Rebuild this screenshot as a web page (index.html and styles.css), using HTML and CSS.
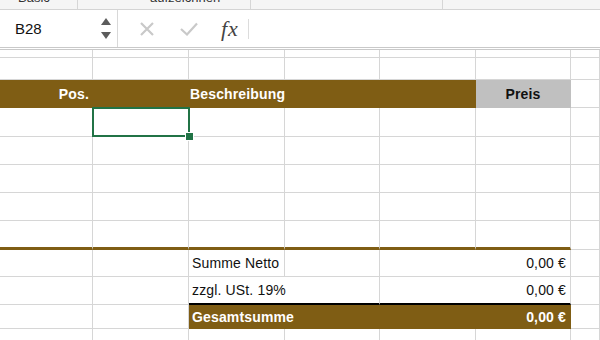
FILE: index.html
```html
<!DOCTYPE html>
<html lang="de">
<head>
    <meta charset="UTF-8">
    <title>Rechnung – Tabelle</title>
    <link rel="stylesheet" href="styles.css">
</head>
<body>
    <div class="ribbon">
        <span class="ribbon-item item-basic">Basic</span>
        <span class="ribbon-sep"></span>
        <span class="ribbon-item item-record">aufzeichnen</span>
        <span class="ribbon-sep sep-2"></span>
        <span class="ribbon-sep sep-3"></span>
    </div>

    <div class="formula-bar">
        <div class="name-box">
            <span class="cell-ref">B28</span>
            <span class="stepper">
                <span class="arrow-up"></span>
                <span class="arrow-down"></span>
            </span>
        </div>
        <div class="formula-tools">
            <svg class="tool tool-cancel" width="18" height="14" viewBox="0 0 18 14">
                <path d="M3 1 L15 13 M15 1 L3 13" stroke="#c9c9c9" stroke-width="2.2" fill="none"/>
            </svg>
            <svg class="tool tool-ok" width="20" height="14" viewBox="0 0 20 14">
                <path d="M2 7 L8 12.5 L18 1.5" stroke="#c9c9c9" stroke-width="2.2" fill="none"/>
            </svg>
            <span class="fx">fx</span>
            <span class="tool-sep"></span>
        </div>
        <div class="formula-input"></div>
    </div>

    <div class="sheet">
        <div class="row row-cut">
            <div></div><div></div><div></div><div></div><div></div><div></div><div></div>
        </div>
        <div class="row row-spacer">
            <div></div><div></div><div></div><div></div><div></div><div></div><div></div>
        </div>
        <div class="row row-head">
            <div class="head right">Pos.</div>
            <div class="head"></div>
            <div class="head left">Beschreibung</div>
            <div class="head"></div>
            <div class="head"></div>
            <div class="head-price">Preis</div>
            <div></div>
        </div>
        <div class="row row-item row-first">
            <div></div>
            <div class="selected"><span class="sel-box"></span><span class="sel-handle"></span></div>
            <div></div><div></div><div></div><div></div><div></div>
        </div>
        <div class="row row-item">
            <div></div><div></div><div></div><div></div><div></div><div></div><div></div>
        </div>
        <div class="row row-item">
            <div></div><div></div><div></div><div></div><div></div><div></div><div></div>
        </div>
        <div class="row row-item">
            <div></div><div></div><div></div><div></div><div></div><div></div><div></div>
        </div>
        <div class="row row-last">
            <div class="rule"></div><div class="rule"></div><div class="rule"></div>
            <div class="rule"></div><div class="rule"></div><div class="rule"></div><div></div>
        </div>
        <div class="row row-sum">
            <div></div><div></div>
            <div class="label">Summe Netto</div>
            <div></div>
            <div class="value span-2">0,00 €</div>
            <div></div>
        </div>
        <div class="row row-tax">
            <div></div><div></div>
            <div class="label span-2 black-rule">zzgl. USt. 19%</div>
            <div class="value span-2 black-rule">0,00 €</div>
            <div></div>
        </div>
        <div class="row row-total">
            <div></div><div></div>
            <div class="label span-2 total">Gesamtsumme</div>
            <div class="value span-2 total">0,00 €</div>
            <div></div>
        </div>
        <div class="row row-end">
            <div></div><div></div><div></div><div></div><div></div><div></div><div></div>
        </div>
    </div>
</body>
</html>
```

FILE: styles.css
```css
:root {
    --brown: #7f5d14;
    --grid: #d6d6d6;
    --green: #217346;
    --price: #c0c0c0;
}

* {
    box-sizing: border-box;
    margin: 0;
    padding: 0;
}

body {
    width: 600px;
    height: 340px;
    overflow: hidden;
    background: #fff;
    font-family: 'Liberation Sans', Arial, sans-serif;
    color: #111;
}

/* ribbon remains */
.ribbon {
    height: 10px;
    background: #f5f5f5;
    border-bottom: 1px solid #d4d4d4;
    display: flex;
    align-items: flex-start;
    overflow: hidden;
    font-size: 13px;
    color: #333;
}

.ribbon-item {
    line-height: 13px;
    margin-top: -9px;
}

.item-basic {
    margin-left: 18px;
    width: 59px;
}

.item-record {
    margin-left: 72px;
    width: 100px;
}

.ribbon-sep {
    width: 1px;
    height: 10px;
    background: #d6d6d6;
}

.sep-3 {
    margin-left: 191px;
}

/* formula bar */
.formula-bar {
    height: 40px;
    display: flex;
    border-bottom: 3px double #c9c9c9;
    background: #fff;
}

.name-box {
    width: 118px;
    border-right: 1px solid #d8d8d8;
    display: flex;
    align-items: center;
    justify-content: space-between;
    padding: 0 6px 0 15px;
}

.cell-ref {
    font-size: 15px;
    color: #111;
}

.stepper {
    display: flex;
    flex-direction: column;
    gap: 7px;
}

.arrow-up,
.arrow-down {
    width: 0;
    height: 0;
    border-left: 5px solid transparent;
    border-right: 5px solid transparent;
}

.arrow-up {
    border-bottom: 7px solid #5c5c5c;
}

.arrow-down {
    border-top: 7px solid #5c5c5c;
}

.formula-tools {
    display: flex;
    align-items: center;
    padding-left: 20px;
}

.tool-ok {
    margin-left: 23px;
}

.fx {
    font-family: 'Liberation Serif', 'Times New Roman', serif;
    font-style: italic;
    font-size: 22px;
    color: #444;
    margin-left: 22px;
    letter-spacing: 1px;
}

.tool-sep {
    width: 1px;
    height: 20px;
    background: #dcdcdc;
    margin-left: 9px;
}

.formula-input {
    flex: 1;
}

/* sheet */
.row {
    display: grid;
    grid-template-columns: 93px 96px 96px 95px 96px 95px 29px;
    font-size: 14px;
    letter-spacing: 0.15px;
}

.row > div {
    border-right: 1px solid var(--grid);
    border-bottom: 1px solid var(--grid);
    display: flex;
    align-items: center;
    white-space: nowrap;
}

.row-cut { height: 8px; }
.row-spacer { height: 22px; }
.row-head { height: 28px; }
.row-item { height: 28px; }
.row-first { height: 29px; }
.row-last { height: 29px; }
.row-sum { height: 27px; }
.row-tax { height: 28px; }
.row-total { height: 24px; }
.row-end { height: 12px; }

.row-head .head {
    background: var(--brown);
    border-color: var(--brown);
    color: #fff;
    font-weight: bold;
    overflow: visible;
}

.head.right {
    justify-content: flex-end;
    padding-right: 3px;
}

.head.left {
    padding-left: 1px;
}

.row-head .head-price {
    background: var(--price);
    border-color: var(--price);
    justify-content: center;
    font-weight: bold;
}

.selected {
    position: relative;
}

.sel-box {
    position: absolute;
    left: -1px;
    top: -1px;
    right: -2px;
    bottom: -1px;
    border: 2px solid var(--green);
}

.sel-handle {
    position: absolute;
    right: -5px;
    bottom: -4px;
    width: 7px;
    height: 7px;
    background: var(--green);
    outline: 1px solid #fff;
}

.row-last .rule {
    border-bottom: 3px solid var(--brown);
}

.span-2 {
    grid-column: span 2;
}

.label {
    padding-left: 3px;
}

.value {
    justify-content: flex-end;
    padding-right: 4px;
}

.row > .black-rule {
    border-bottom: 2px solid #000;
}

.row > .total {
    background: var(--brown);
    border-color: var(--brown);
    color: #fff;
    font-weight: bold;
}
```
